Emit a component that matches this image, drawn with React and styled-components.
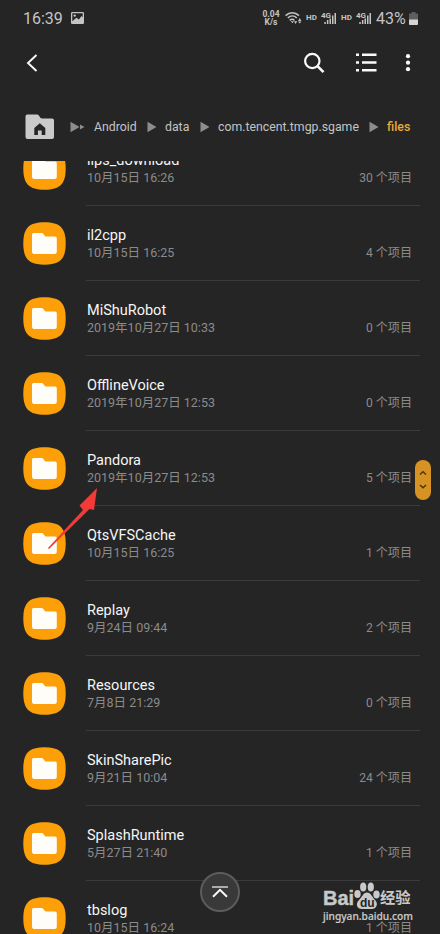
import React from 'react';
import styled, { createGlobalStyle } from 'styled-components';

const GlobalStyle = createGlobalStyle`
  * {
    box-sizing: border-box;
  }

  body {
    margin: 0;
    background: #252525;
    font-family: Roboto, 'Noto Sans CJK SC', sans-serif;
  }

  svg {
    display: block;
    flex: none;
  }
`;

const Screen = styled.div`
  position: relative;
  display: flex;
  flex-direction: column;
  width: 440px;
  height: 934px;
  overflow: hidden;
  background: #252525;
  color: #fafafa;
`;

const StatusBar = styled.div`
  display: flex;
  justify-content: space-between;
  align-items: center;
  height: 36px;
  padding: 0 22px 0 23px;
  color: #c4c4c4;
`;

const StatusGroup = styled.div`
  display: flex;
  align-items: center;
`;

const Clock = styled.span`
  width: 48px;
  padding-top: 1px;
  font-size: 16px;
  line-height: 35px;
  white-space: nowrap;
`;

const NetSpeed = styled.div`
  display: flex;
  flex-direction: column;
  align-items: center;
  width: 18px;
  margin-right: 5px;
  font-size: 8.5px;
  font-weight: 700;
  line-height: 8px;
`;

const Hd = styled.span`
  width: 12px;
  margin: 0 3px 0 4px;
  font-size: 8px;
  font-weight: 700;
  line-height: 12px;
`;

const SignalBox = styled.div`
  display: flex;
  width: 16px;
`;

const BatteryText = styled.span`
  width: 32px;
  margin: 0 1px 0 4px;
  font-size: 16px;
  white-space: nowrap;
`;

const Toolbar = styled.div`
  display: flex;
  justify-content: space-between;
  align-items: center;
  height: 53px;
  padding: 0 29.5px 0 26px;
`;

const Actions = styled.div`
  display: flex;
  align-items: center;
`;

const Breadcrumb = styled.div`
  display: flex;
  align-items: center;
  height: 72px;
  padding: 3px 0 0 25px;
  font-size: 12.3px;
  color: #c4c4c4;
`;

const Crumb = styled.span`
  width: ${({ $width }) => $width}px;
  white-space: nowrap;
  font-weight: ${({ $active }) => ($active ? 500 : 400)};
  color: ${({ $active }) => ($active ? '#e9a93a' : '#c4c4c4')};
`;

const List = styled.div`
  display: flex;
  flex: 1;
  flex-direction: column;
  overflow: hidden;
`;

const Row = styled.div`
  display: flex;
  flex: none;
  height: 75px;
  padding: 0 20px 0 23px;

  &:first-child {
    margin-top: -30px;
  }
`;

const IconCell = styled.div`
  width: 63px;
  padding-top: 16px;
`;

const Details = styled.div`
  display: flex;
  flex: 1;
  justify-content: space-between;
  border-bottom: 1px solid #3b3b3b;
  padding: 20px 8px 0 1px;
`;

const Name = styled.div`
  font-size: 14.5px;
  line-height: 20px;
  color: #f6f6f6;
`;

const Meta = styled.div`
  font-size: 12.5px;
  line-height: 14px;
  color: #8b8b8b;
`;

const Count = styled.div`
  padding-top: 19px;
  font-size: 12.1px;
  line-height: 16px;
  color: #8b8b8b;
`;

const ScrollHandle = styled.div`
  position: absolute;
  top: 460px;
  left: 415px;
  display: flex;
  justify-content: center;
  align-items: center;
  width: 16px;
  height: 40px;
  border-radius: 8px;
  background: #d69223;
`;

const TopButton = styled.div`
  position: absolute;
  top: 872px;
  left: 200px;
  display: flex;
  justify-content: center;
  align-items: center;
  width: 40px;
  height: 40px;
  border: 2px solid #5c5c5c;
  border-radius: 50%;
  background: #393939;
`;

const Pointer = styled.svg`
  position: absolute;
  top: 485px;
  left: 45px;
`;

const Watermark = styled.div`
  position: absolute;
  top: 879px;
  left: 323px;
  width: 92px;
  color: #c9c9c9;
`;

const Brand = styled.div`
  display: flex;
  align-items: flex-end;
  height: 31px;
  font-family: 'Liberation Sans', 'Noto Sans CJK SC', sans-serif;
  font-weight: 700;
  white-space: nowrap;
`;

const BrandLatin = styled.span`
  width: 31px;
  font-size: 20px;
  line-height: 24px;
  -webkit-text-stroke: 0.4px #c9c9c9;
`;

const BrandChinese = styled.span`
  font-size: 15.3px;
  line-height: 24px;
`;

const Site = styled.div`
  font-family: 'Noto Sans', sans-serif;
  font-size: 10.2px;
  font-weight: 500;
  line-height: 13px;
  white-space: nowrap;
  -webkit-text-stroke: 0.2px #c9c9c9;
`;

const folders = [
  { name: 'ilps_download', date: '10月15日 16:26', count: 30 },
  { name: 'il2cpp', date: '10月15日 16:25', count: 4 },
  { name: 'MiShuRobot', date: '2019年10月27日 10:33', count: 0 },
  { name: 'OfflineVoice', date: '2019年10月27日 12:53', count: 0 },
  { name: 'Pandora', date: '2019年10月27日 12:53', count: 5 },
  { name: 'QtsVFSCache', date: '10月15日 16:25', count: 1 },
  { name: 'Replay', date: '9月24日 09:44', count: 2 },
  { name: 'Resources', date: '7月8日 21:29', count: 0 },
  { name: 'SkinSharePic', date: '9月21日 10:04', count: 24 },
  { name: 'SplashRuntime', date: '5月27日 21:40', count: 1 },
  { name: 'tbslog', date: '10月15日 16:24', count: 1 },
];

const PictureIcon = () => (
  <svg width="13" height="12" viewBox="0 0 13 12">
    <rect width="13" height="12" rx="1.2" fill="#c4c4c4" />
    <path d="M1.3 1.3h10.4v3.9L10.6 4 7.9 7.4 5.4 5.7 1.3 9.2z" fill="#252525" />
    <circle cx="3.7" cy="3.6" r="1.2" fill="#c4c4c4" />
  </svg>
);

const WifiIcon = () => (
  <svg width="17" height="14" viewBox="0 0 17 14" fill="none" stroke="#c4c4c4">
    <path d="M.6 4.6C4.5.7 10 .7 14 4.6M2.800 7c2.700-2.600 6.400-2.600 9 0M4.800 9.400c1.400-1.400 3.300-1.400 4.600 0" strokeWidth="1.500" />
    <path d="M5.800 10.300h3.200l-1.600 2zM9 10.300h3.200L10.600 13zM13 10h3.400l-1.700-3zM13 10.400h3.400l-1.700 2z" fill="#c4c4c4" stroke="none" />
  </svg>
);

const NetType = styled.text`
  font-family: Roboto, sans-serif;
  font-size: 8px;
  font-weight: 700;
`;

const Signal = () => (
  <SignalBox>
    <svg width="16" height="14" viewBox="0 0 16 14" fill="#c4c4c4">
      <NetType x="0" y="6.5">4G</NetType>
      <path d="M3.300 11h1.500v2H3.300zM5.900 9h1.500v4H5.900zM8.500 7.500H10V13H8.500zM11 4.500h1.500V13H11zM13.500 2H15v11h-1.500z" />
    </svg>
  </SignalBox>
);

const BatteryIcon = () => (
  <svg width="9" height="13" viewBox="0 0 9 13">
    <path d="M2.500 0h4v1.500H9V8H0V1.500h2.500z" fill="#5e5e5e" />
    <path d="M0 7.500h9V12a1 1 0 0 1-1 1H1a1 1 0 0 1-1-1z" fill="#d4d4d4" />
  </svg>
);

const HomeFolder = () => (
  <svg width="30" height="26" viewBox="0 0 30 26">
    <path d="M2 .5h10.500c1.500 0 2.500 4 4.500 4h10a2 2 0 0 1 2 2V23a2 2 0 0 1-2 2H2.500a2 2 0 0 1-2-2V2.500a2 2 0 0 1 1.500-2z" fill="#cacaca" />
    <path d="M14.800 9.300l5.500 4.700V21h-3.600v-4.500h-3.800V21H9.300v-7z" fill="#252525" />
  </svg>
);

const Arrow = ({ double }) => (
  <svg width={double ? 24 : 18.5} height="12" viewBox={double ? '0 0 24 12' : '0 0 18.5 12'} fill="#8d8d8d">
    <path d="M.5.7l9 5.300-9 5.300z" />
    {double && <path d="M10 3.400L14.500 6 10 8.600z" />}
  </svg>
);

const FolderIcon = () => (
  <svg width="43" height="43" viewBox="0 0 43 43">
    <path d="M21.500.3C37 .3 42.700 6 42.700 21.500S37 42.700 21.500 42.700.3 37 .3 21.500 6 .3 21.500.3z" fill="#fc9f09" />
    <path d="M10.500 11h8.300c1.900 0 2.200 3.400 4.200 3.400h9a1.800 1.800 0 0 1 1.800 1.800v13.900a1.800 1.800 0 0 1-1.800 1.800H10.800A1.800 1.800 0 0 1 9 30.100V12.600A1.600 1.600 0 0 1 10.500 11z" fill="#fffdf8" />
  </svg>
);

const Paw = () => (
  <svg width="26" height="28" viewBox="0 0 26 28" fill="#c9c9c9">
    <ellipse cx="3.500" cy="12" rx="3.200" ry="4" />
    <ellipse cx="9.200" cy="5" rx="3.100" ry="4.500" />
    <ellipse cx="16.800" cy="5" rx="3.100" ry="4.500" />
    <ellipse cx="22.500" cy="12.500" rx="3.200" ry="4" />
    <path d="M13 10.500c4 0 5 4.500 8 7.500 4 4 1 9-3 9H8c-5 0-7-5-3-9 3.500-3 4-7.500 8-7.500z" />
    <text x="6" y="24.500" fontFamily="Liberation Sans" fontSize="12" fontWeight="700" fill="#252525">du</text>
  </svg>
);

const App = () => (
  <>
    <GlobalStyle />
    <Screen>
      <StatusBar>
        <StatusGroup>
          <Clock>16:39</Clock>
          <PictureIcon />
        </StatusGroup>
        <StatusGroup>
          <NetSpeed>
            <span>0.04</span>
            <span>K/s</span>
          </NetSpeed>
          <WifiIcon />
          <Hd>HD</Hd>
          <Signal />
          <Hd>HD</Hd>
          <Signal />
          <BatteryText>43%</BatteryText>
          <BatteryIcon />
        </StatusGroup>
      </StatusBar>

      <Toolbar>
        <svg width="12" height="18" viewBox="0 0 12 18" fill="none" stroke="#fafafa" strokeWidth="1.900">
          <path d="M10.500 1L2 9l8.500 8" />
        </svg>
        <Actions>
          <svg width="52" height="22" viewBox="0 0 52 22" fill="none" stroke="#fafafa" strokeWidth="2.200">
            <circle cx="8.300" cy="9" r="7.200" />
            <path d="M13.500 14.200l6 6" strokeWidth="2.600" />
          </svg>
          <svg width="49" height="20" viewBox="0 0 49 20" fill="#fafafa">
            <path d="M0 .5h3V3H0zM6 .5h14.500V3H6zM0 8.300h3v2.500H0zM6 8.300h14.500v2.500H6zM0 16h3v2.500H0zM6 16h14.500v2.500H6z" />
          </svg>
          <svg width="6" height="18" viewBox="0 0 6 18" fill="#fafafa">
            <circle cx="3" cy="2.200" r="2.100" />
            <circle cx="3" cy="8.700" r="2.100" />
            <circle cx="3" cy="15.200" r="2.100" />
          </svg>
        </Actions>
      </Toolbar>

      <Breadcrumb>
        <Crumb $width={45}><HomeFolder /></Crumb>
        <Arrow double />
        <Crumb $width={52.5}>Android</Crumb>
        <Arrow />
        <Crumb $width={34.5}>data</Crumb>
        <Arrow />
        <Crumb $width={150.5}>com.tencent.tmgp.sgame</Crumb>
        <Arrow />
        <Crumb $width={30} $active>files</Crumb>
      </Breadcrumb>

      <List>
        {folders.map(({ name, date, count }) => (
          <Row key={name}>
            <IconCell><FolderIcon /></IconCell>
            <Details>
              <div>
                <Name>{name}</Name>
                <Meta>{date}</Meta>
              </div>
              <Count>{count} 个项目</Count>
            </Details>
          </Row>
        ))}
      </List>

      <Pointer width="54" height="66" viewBox="0 0 54 66" fill="#f23a39">
        <path d="M3 63L38 25l-3.500-4.500L52 3l-3 22-4.500-1L4 64z" />
      </Pointer>

      <ScrollHandle>
        <svg width="8" height="20" viewBox="0 0 8 20" fill="none" stroke="#4b3510" strokeWidth="1.500">
          <path d="M1 4.500L4 1.800l3 2.700M1 15l3 2.700L7 15" />
        </svg>
      </ScrollHandle>

      <TopButton>
        <svg width="16" height="12" viewBox="0 0 16 12" fill="none" stroke="#fafafa">
          <path d="M0 1h16" strokeWidth="1.200" />
          <path d="M1 10.800l7-7 7 7" strokeWidth="2" />
        </svg>
      </TopButton>

      <Watermark>
        <Brand>
          <BrandLatin>Bai</BrandLatin>
          <Paw />
          <BrandChinese>经验</BrandChinese>
        </Brand>
        <Site>jingyan.baidu.com</Site>
      </Watermark>
    </Screen>
  </>
);

export default App;
